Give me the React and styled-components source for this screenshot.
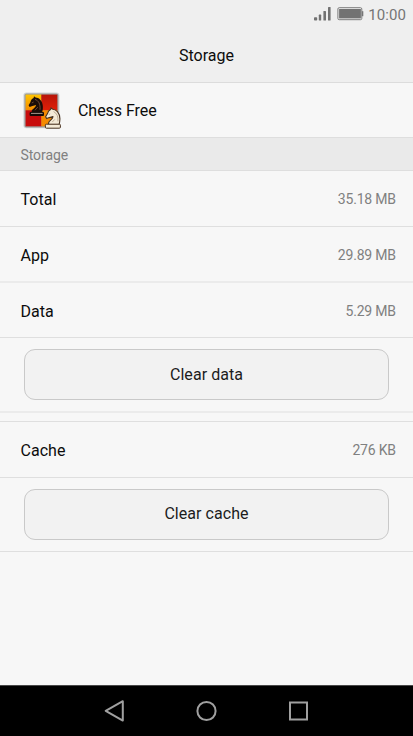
import React from "react";
import styled, { createGlobalStyle } from "styled-components";

const GlobalStyle = createGlobalStyle`
  * { box-sizing: border-box; }
  html, body { margin: 0; padding: 0; background: #f7f7f7; }
  body { font-family: Roboto, "Noto Sans", sans-serif; color: #0c0c0c; }
`;

const Screen = styled.div`
  display: flex;
  flex-direction: column;
  width: 413px;
  height: 736px;
  overflow: hidden;
  background: #f7f7f7;
`;

const StatusBar = styled.div`
  display: flex;
  flex: none;
  align-items: center;
  justify-content: flex-end;
  height: 28px;
  padding-right: 7px;
  background: #efefef;
`;

const StatusIcons = styled.svg`
  flex: none;
  width: 50px;
  height: 14px;
  margin-right: 4px;
`;

const Clock = styled.span`
  padding-top: 2px;
  font-size: 15px;
  line-height: 26px;
  letter-spacing: 0.1px;
  color: #757575;
`;

const TitleBar = styled.header`
  display: flex;
  flex: none;
  align-items: center;
  justify-content: center;
  height: 55px;
  padding-top: 2px;
  border-bottom: 1px solid #dcdcdc;
  background: #efefef;
`;

const Title = styled.h1`
  margin: 0;
  font-size: 16px;
  line-height: 20px;
  font-weight: 400;
`;

const AppRow = styled.div`
  display: flex;
  flex: none;
  align-items: center;
  height: 54px;
  padding-left: 22px;
`;

const AppIcon = styled.svg`
  flex: none;
  width: 40px;
  height: 40px;
  margin-right: 16px;
`;

const Label = styled.span`
  font-size: 16px;
  line-height: 20px;
`;

const AppName = styled(Label)`
  padding-top: 2px;
  letter-spacing: -0.05px;
`;

const SectionHeader = styled.div`
  flex: none;
  height: 34px;
  padding-left: 20.5px;
  border-top: 1px solid #dedede;
  border-bottom: 1px solid #dedede;
  background: #eaeaea;
  font-size: 14px;
  line-height: 34px;
  letter-spacing: -0.08px;
  color: #808080;
`;

const Row = styled.div`
  display: flex;
  flex: none;
  align-items: center;
  justify-content: space-between;
  height: ${(p) => p.$height}px;
  padding: 3px 17.2px 0 20.6px;
  border-bottom: ${(p) => (p.$soft ? "2px solid #ebebeb" : "1px solid #dfdfdf")};
`;

const Value = styled.span`
  padding-bottom: 2px;
  font-size: 14px;
  line-height: 20px;
  letter-spacing: -0.2px;
  color: #808080;
`;

const ActionArea = styled.div`
  flex: none;
  height: ${(p) => p.$height}px;
  padding: 11px 24px 0;
  border-bottom: ${(p) => (p.$soft ? "2px solid #ebebeb" : "1px solid #dfdfdf")};
`;

const ActionButton = styled.button`
  display: block;
  width: 365px;
  height: 51px;
  margin: 0;
  padding: 0 0 ${(p) => p.$lift}px;
  border: 1px solid #c9c9c9;
  border-radius: 11px;
  background: #f2f2f2;
  color: #1c1c1c;
  font-family: inherit;
  font-size: 16px;
  letter-spacing: 0.05px;
`;

const GroupGap = styled.div`
  flex: none;
  height: 9px;
  border-bottom: 1px solid #dfdfdf;
`;

const NavBar = styled.nav`
  display: flex;
  flex: none;
  align-items: center;
  justify-content: center;
  gap: 68px;
  height: 51px;
  margin-top: auto;
  border-top: 1px solid #484848;
  background: #000;
`;

const NavIcon = styled.svg`
  width: 24px;
  height: 24px;
  fill: none;
  stroke: #a0a0a0;
  stroke-width: 2;
`;

const KNIGHT =
  "M3.6 17.4 H14 C15.4 12.5 15.4 7.6 12.4 4.2 C11 2.6 9 1.8 7.6 1.8 L6 .4 L5.6 2.2 C3.6 3 2.8 4.6 2.4 6.4 L.6 9.4 L1.6 11.2 L4.4 10.2 L8 9.2 C7.8 12 4.2 13 3.6 15.4 Z";

function ChessIcon() {
  return (
    <AppIcon viewBox="22 90 40 40">
      <defs>
        <linearGradient id="yellow" x1="0" y1="0" x2="0" y2="1">
          <stop offset="0" stopColor="#ffc400" />
          <stop offset="1" stopColor="#f58a00" />
        </linearGradient>
        <linearGradient id="red" x1="0" y1="0" x2="0" y2="1">
          <stop offset="0" stopColor="#b81408" />
          <stop offset="1" stopColor="#e02008" />
        </linearGradient>
      </defs>
      <rect x="23.4" y="92.6" width="36" height="35.6" rx="3" fill="#c0c6c8" opacity=".7" />
      <rect x="24.4" y="93.4" width="34" height="34" rx="2" fill="#9c9c9a" />
      <rect x="25.6" y="94.6" width="16" height="16" fill="url(#yellow)" />
      <rect x="41.3" y="94.6" width="16" height="16" fill="url(#red)" />
      <rect x="25.6" y="110.3" width="16" height="16" fill="#c80c0c" />
      <rect x="41.3" y="110.3" width="16" height="16" fill="#f58a00" />
      <g transform="translate(28 95.8)">
        <path d={KNIGHT} fill="#1b0d08" />
        <path d="M7 3.6 C10.6 4.8 12.4 8 12 14 M3.8 7.2 L5.6 6.2 M7 14.4 L9.8 11.4" fill="none" stroke="#795038" strokeWidth=".9" />
        <rect x="1.6" y="16.2" width="14.4" height="4" rx="1" fill="#160b08" />
        <path d="M3 17.6 H14.6" stroke="#a89488" strokeWidth="1" />
      </g>
      <g transform="translate(45 107.4)">
        <path d={KNIGHT} fill="#f4ead6" stroke="#493321" strokeWidth="1.1" strokeLinejoin="round" />
        <path d="M8.6 4.2 C12 6 13.4 9 12.9 14 M3.8 7.2 L5.2 6.4 M7.3 14.6 L9.8 12" fill="none" stroke="#b7a58d" strokeWidth=".9" />
        <rect x=".4" y="16.8" width="15" height="4" rx="1" fill="#f4ead6" stroke="#493321" strokeWidth="1" />
      </g>
    </AppIcon>
  );
}

export default function App() {
  return (
    <>
      <GlobalStyle />
      <Screen>
        <StatusBar>
          <StatusIcons viewBox="314 7 50 14">
            <g fill="#727272">
              <rect x="314" y="17.2" width="3.2" height="3.4" rx=".8" />
              <rect x="318.8" y="14.6" width="2.4" height="6" rx=".6" />
              <rect x="323.4" y="11" width="2.6" height="9.6" rx=".6" />
              <rect x="328" y="7" width="2.6" height="13.6" rx=".6" />
              <rect x="339.1" y="9" width="21.8" height="9.4" />
              <rect x="361.8" y="11.2" width="1.5" height="5" />
            </g>
            <rect x="337.9" y="7.7" width="23.9" height="12" rx="1.3" fill="none" stroke="#7c7c7c" strokeWidth="1" />
          </StatusIcons>
          <Clock>10:00</Clock>
        </StatusBar>
        <TitleBar>
          <Title>Storage</Title>
        </TitleBar>
        <AppRow>
          <ChessIcon />
          <AppName>Chess Free</AppName>
        </AppRow>
        <SectionHeader>Storage</SectionHeader>
        <Row $height={56}>
          <Label>Total</Label>
          <Value>35.18 MB</Value>
        </Row>
        <Row $height={56} $soft>
          <Label>App</Label>
          <Value>29.89 MB</Value>
        </Row>
        <Row $height={55}>
          <Label>Data</Label>
          <Value>5.29 MB</Value>
        </Row>
        <ActionArea $height={75} $soft>
          <ActionButton $lift={1}>Clear data</ActionButton>
        </ActionArea>
        <GroupGap />
        <Row $height={56}>
          <Label>Cache</Label>
          <Value>276 KB</Value>
        </Row>
        <ActionArea $height={74}>
          <ActionButton $lift={2}>Clear cache</ActionButton>
        </ActionArea>
        <NavBar>
          <NavIcon viewBox="0.5 0 24 24">
            <path d="M20.3 2.2 V21.6 L3.2 11.8 Z" strokeLinejoin="round" />
          </NavIcon>
          <NavIcon viewBox="0.5 0 24 24">
            <circle cx="12" cy="12" r="9.1" />
          </NavIcon>
          <NavIcon viewBox="0.5 0 24 24">
            <rect x="3.5" y="3.5" width="17" height="17" />
          </NavIcon>
        </NavBar>
      </Screen>
    </>
  );
}
